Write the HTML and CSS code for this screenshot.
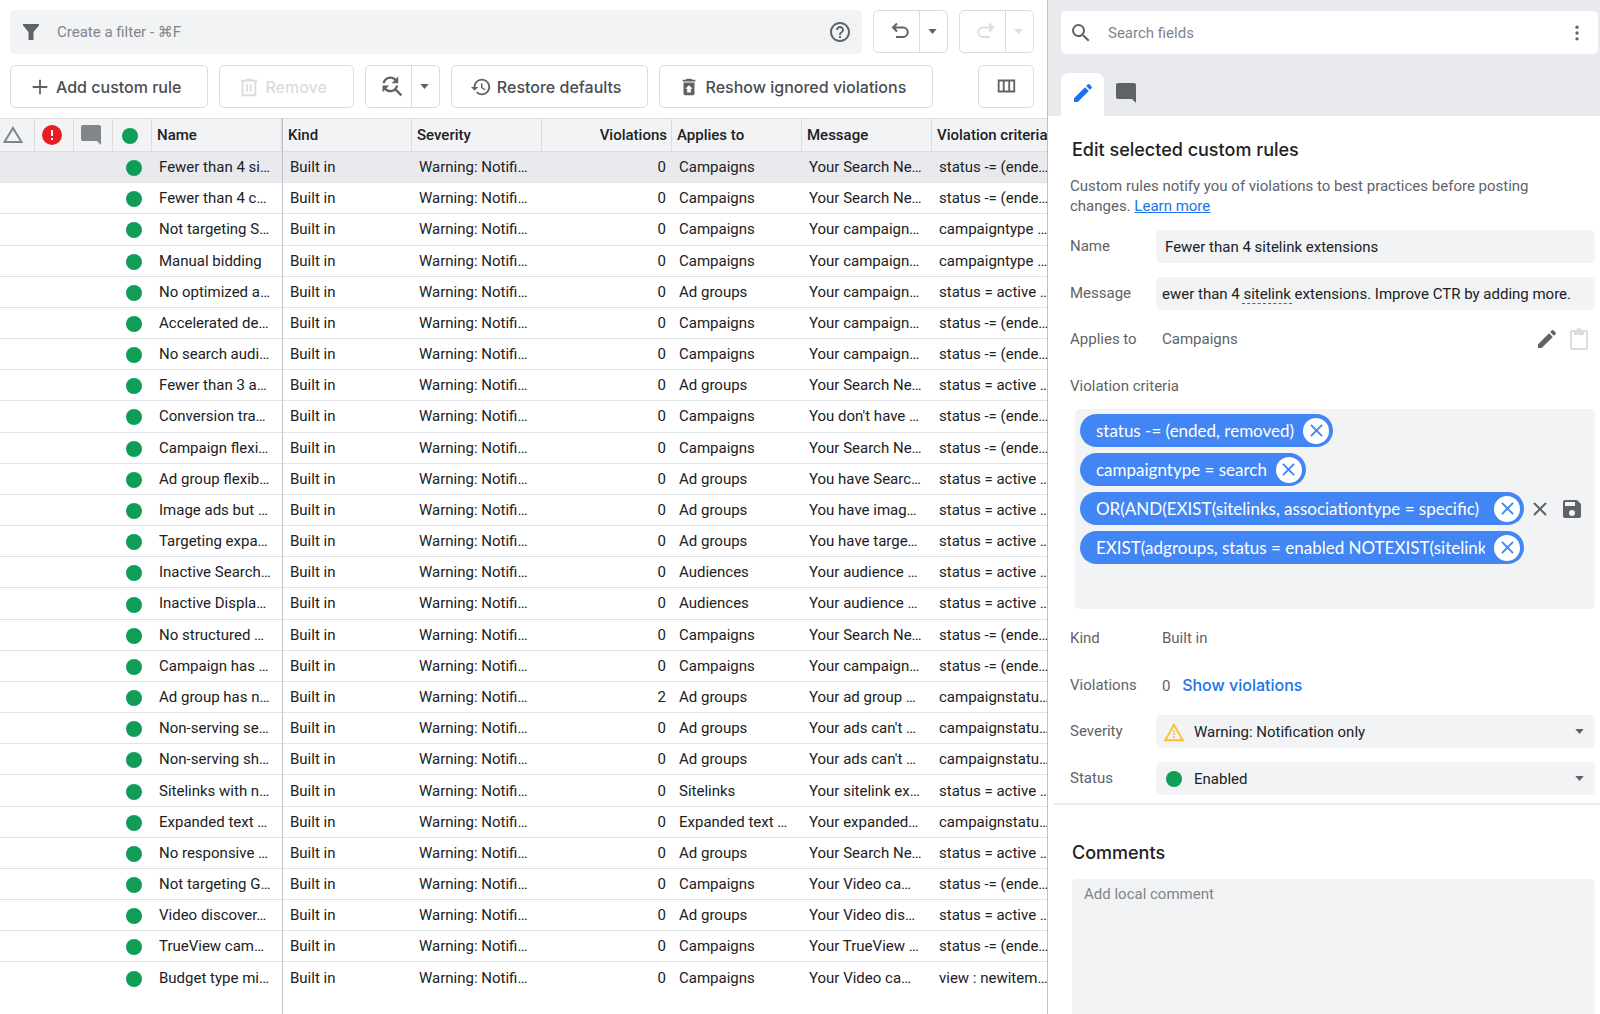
FILE: index.html
```html
<!DOCTYPE html>
<html lang="en">
<head>
    <meta charset="UTF-8">
    <meta name="viewport" content="width=device-width, initial-scale=1.0">
    <title>Custom rules</title>
    <link rel="stylesheet" href="styles.css">
</head>
<body>
<svg class="sprite" aria-hidden="true">
    <symbol id="i-pencil" viewBox="0 0 24 24"><path d="M3 17.25V21h3.75L17.81 9.94l-3.75-3.75L3 17.25zM20.71 7.04a1 1 0 0 0 0-1.41l-2.34-2.34a1 1 0 0 0-1.41 0l-1.83 1.83 3.75 3.75 1.83-1.83z"/></symbol>
    <symbol id="i-comment" viewBox="0 0 24 24"><path d="M22 22l-4-4H4c-1.100 0-2-.9-2-2V4c0-1.100.9-2 2-2h16c1.100 0 2 .9 2 2z"/></symbol>
    <symbol id="i-caret" viewBox="0 0 10 6"><path d="M0 0h10L5 6z"/></symbol>
    <symbol id="i-close" viewBox="0 0 14 14"><path d="M1 1l12 12M13 1L1 13" fill="none" stroke="currentColor" stroke-width="2"/></symbol>
</svg>

<main class="app">
    <section class="list-pane">
        <div class="toolbar">
            <div class="filter-box">
                <svg class="icon" viewBox="0 0 24 24"><path d="M4 4h16v1.500L14.500 12v8h-5v-8L4 5.500z"/></svg>
                <input type="text" aria-label="Create a filter" placeholder="Create a filter - ⌘F">
                <button class="icon-btn" aria-label="Help"><svg class="icon" viewBox="0 0 24 24"><path d="M11 18h2v-2h-2v2zm1-16C6.480 2 2 6.480 2 12s4.480 10 10 10 10-4.480 10-10S17.520 2 12 2zm0 18c-4.410 0-8-3.590-8-8s3.590-8 8-8 8 3.590 8 8-3.590 8-8 8zm0-14c-2.210 0-4 1.790-4 4h2c0-1.100.9-2 2-2s2 .9 2 2c0 2-3 1.750-3 5h2c0-2.250 3-2.500 3-5 0-2.210-1.790-4-4-4z"/></svg></button>
            </div>
            <div class="split">
                <button aria-label="Undo"><svg class="icon" viewBox="0 0 24 24"><path d="M9 4.500L5 8.500l4 4M5.500 8.500H15a4.500 4.500 0 0 1 0 9.500H8" fill="none" stroke="currentColor" stroke-width="2"/></svg></button>
                <button class="drop" aria-label="Undo history"><svg class="caret"><use href="#i-caret"/></svg></button>
            </div>
            <div class="split off">
                <button aria-label="Redo" disabled><svg class="icon" viewBox="0 0 24 24"><path d="M15 4.500l4 4-4 4M18.500 8.500H9a4.500 4.500 0 0 0 0 9.500H16" fill="none" stroke="currentColor" stroke-width="2"/></svg></button>
                <button class="drop" aria-label="Redo history" disabled><svg class="caret"><use href="#i-caret"/></svg></button>
            </div>
        </div>

        <div class="toolbar actions">
            <button class="btn"><svg class="icon" viewBox="0 0 24 24"><path d="M12 4v16M4 12h16" fill="none" stroke="currentColor" stroke-width="2"/></svg>Add custom rule</button>
            <button class="btn" disabled><svg class="icon" viewBox="0 0 24 24"><path d="M3 5h18M9 4h6M5 5v16h14V5M10 9v8M14 9v8" fill="none" stroke="currentColor" stroke-width="2"/></svg>Remove</button>
            <div class="split">
                <button aria-label="Check rules"><svg class="icon wide" viewBox="0 0 24 24"><path d="M11 6c1.380 0 2.630.56 3.540 1.460L12 10h6V4l-2.050 2.050C14.680 4.780 12.930 4 11 4c-3.530 0-6.430 2.610-6.920 6H6.100c.46-2.280 2.480-4 4.900-4zm5.640 9.140c.66-.9 1.120-1.970 1.280-3.140H15.900c-.46 2.280-2.480 4-4.900 4-1.380 0-2.630-.56-3.540-1.460L10 12H4v6l2.050-2.050C7.320 17.220 9.070 18 11 18c1.550 0 2.980-.51 4.140-1.360L20 21.490 21.490 20l-4.850-4.860z"/></svg></button>
                <button class="drop" aria-label="More check options"><svg class="caret"><use href="#i-caret"/></svg></button>
            </div>
            <button class="btn"><svg class="icon" viewBox="0 0 24 24"><path d="M13 3c-4.970 0-9 4.030-9 9H1l3.890 3.890.07.14L9 12H6c0-3.870 3.130-7 7-7s7 3.130 7 7-3.130 7-7 7c-1.930 0-3.680-.79-4.940-2.060l-1.420 1.420C8.270 19.990 10.510 21 13 21c4.970 0 9-4.030 9-9s-4.030-9-9-9zm-1 5v5l4.280 2.540.72-1.210-3.500-2.080V8H12z"/></svg>Restore defaults</button>
            <button class="btn"><svg class="icon" viewBox="0 0 24 24"><path d="M19 4h-3.500l-1-1h-5l-1 1H5v2h14V4zM6 7v12c0 1.100.9 2 2 2h8c1.100 0 2-.9 2-2V7H6zm8 7v4h-4v-4H8l4-4 4 4h-2z"/></svg>Reshow ignored violations</button>
            <button class="btn columns" aria-label="Columns"><svg class="icon" viewBox="0 0 24 24"><path d="M4 6h17v12H4zM9.500 6v12M15.500 6v12" fill="none" stroke="currentColor" stroke-width="2"/></svg></button>
        </div>

        <div class="table-wrap">
            <table class="rules">
                <colgroup>
                    <col class="c-first"><col class="c-icon"><col class="c-icon"><col class="c-icon">
                    <col><col><col><col><col><col><col>
                </colgroup>
                <thead>
                    <tr>
                        <th class="ico first" aria-label="Warnings"><svg class="icon grey" viewBox="0 0 24 24"><path d="M12 5l8.500 14h-17z" fill="none" stroke="currentColor" stroke-width="2"/></svg></th>
                        <th class="ico" aria-label="Errors"><svg class="icon" viewBox="0 0 24 24"><circle cx="12" cy="12" r="10" fill="#ea1c24"/><path d="M11 7h2v6h-2zM11 15h2v2h-2z" fill="#fff"/></svg></th>
                        <th class="ico" aria-label="Comments"><svg class="icon grey"><use href="#i-comment"/></svg></th>
                        <th class="ico" aria-label="Status"><span class="dot"></span></th>
                        <th>Name</th>
                        <th class="split-line">Kind</th>
                        <th>Severity</th>
                        <th class="num">Violations</th>
                        <th>Applies to</th>
                        <th>Message</th>
                        <th>Violation criteria</th>
                    </tr>
                </thead>
                <tbody>
                    <tr class="selected"><td></td><td></td><td></td><td class="st"><span class="dot"></span></td><td>Fewer than 4 si…</td><td class="split-line">Built in</td><td>Warning: Notifi…</td><td class="num">0</td><td>Campaigns</td><td>Your Search Ne…</td><td>status -= (ende…</td></tr>
                    <tr><td></td><td></td><td></td><td class="st"><span class="dot"></span></td><td>Fewer than 4 c…</td><td class="split-line">Built in</td><td>Warning: Notifi…</td><td class="num">0</td><td>Campaigns</td><td>Your Search Ne…</td><td>status -= (ende…</td></tr>
                    <tr><td></td><td></td><td></td><td class="st"><span class="dot"></span></td><td>Not targeting S…</td><td class="split-line">Built in</td><td>Warning: Notifi…</td><td class="num">0</td><td>Campaigns</td><td>Your campaign…</td><td>campaigntype …</td></tr>
                    <tr><td></td><td></td><td></td><td class="st"><span class="dot"></span></td><td>Manual bidding</td><td class="split-line">Built in</td><td>Warning: Notifi…</td><td class="num">0</td><td>Campaigns</td><td>Your campaign…</td><td>campaigntype …</td></tr>
                    <tr><td></td><td></td><td></td><td class="st"><span class="dot"></span></td><td>No optimized a…</td><td class="split-line">Built in</td><td>Warning: Notifi…</td><td class="num">0</td><td>Ad groups</td><td>Your campaign…</td><td>status = active …</td></tr>
                    <tr><td></td><td></td><td></td><td class="st"><span class="dot"></span></td><td>Accelerated de…</td><td class="split-line">Built in</td><td>Warning: Notifi…</td><td class="num">0</td><td>Campaigns</td><td>Your campaign…</td><td>status -= (ende…</td></tr>
                    <tr><td></td><td></td><td></td><td class="st"><span class="dot"></span></td><td>No search audi…</td><td class="split-line">Built in</td><td>Warning: Notifi…</td><td class="num">0</td><td>Campaigns</td><td>Your campaign…</td><td>status -= (ende…</td></tr>
                    <tr><td></td><td></td><td></td><td class="st"><span class="dot"></span></td><td>Fewer than 3 a…</td><td class="split-line">Built in</td><td>Warning: Notifi…</td><td class="num">0</td><td>Ad groups</td><td>Your Search Ne…</td><td>status = active …</td></tr>
                    <tr><td></td><td></td><td></td><td class="st"><span class="dot"></span></td><td>Conversion tra…</td><td class="split-line">Built in</td><td>Warning: Notifi…</td><td class="num">0</td><td>Campaigns</td><td>You don't have …</td><td>status -= (ende…</td></tr>
                    <tr><td></td><td></td><td></td><td class="st"><span class="dot"></span></td><td>Campaign flexi…</td><td class="split-line">Built in</td><td>Warning: Notifi…</td><td class="num">0</td><td>Campaigns</td><td>Your Search Ne…</td><td>status -= (ende…</td></tr>
                    <tr><td></td><td></td><td></td><td class="st"><span class="dot"></span></td><td>Ad group flexib…</td><td class="split-line">Built in</td><td>Warning: Notifi…</td><td class="num">0</td><td>Ad groups</td><td>You have Searc…</td><td>status = active …</td></tr>
                    <tr><td></td><td></td><td></td><td class="st"><span class="dot"></span></td><td>Image ads but …</td><td class="split-line">Built in</td><td>Warning: Notifi…</td><td class="num">0</td><td>Ad groups</td><td>You have imag…</td><td>status = active …</td></tr>
                    <tr><td></td><td></td><td></td><td class="st"><span class="dot"></span></td><td>Targeting expa…</td><td class="split-line">Built in</td><td>Warning: Notifi…</td><td class="num">0</td><td>Ad groups</td><td>You have targe…</td><td>status = active …</td></tr>
                    <tr><td></td><td></td><td></td><td class="st"><span class="dot"></span></td><td>Inactive Search…</td><td class="split-line">Built in</td><td>Warning: Notifi…</td><td class="num">0</td><td>Audiences</td><td>Your audience …</td><td>status = active …</td></tr>
                    <tr><td></td><td></td><td></td><td class="st"><span class="dot"></span></td><td>Inactive Displa…</td><td class="split-line">Built in</td><td>Warning: Notifi…</td><td class="num">0</td><td>Audiences</td><td>Your audience …</td><td>status = active …</td></tr>
                    <tr><td></td><td></td><td></td><td class="st"><span class="dot"></span></td><td>No structured …</td><td class="split-line">Built in</td><td>Warning: Notifi…</td><td class="num">0</td><td>Campaigns</td><td>Your Search Ne…</td><td>status -= (ende…</td></tr>
                    <tr><td></td><td></td><td></td><td class="st"><span class="dot"></span></td><td>Campaign has …</td><td class="split-line">Built in</td><td>Warning: Notifi…</td><td class="num">0</td><td>Campaigns</td><td>Your campaign…</td><td>status -= (ende…</td></tr>
                    <tr><td></td><td></td><td></td><td class="st"><span class="dot"></span></td><td>Ad group has n…</td><td class="split-line">Built in</td><td>Warning: Notifi…</td><td class="num">2</td><td>Ad groups</td><td>Your ad group …</td><td>campaignstatu…</td></tr>
                    <tr><td></td><td></td><td></td><td class="st"><span class="dot"></span></td><td>Non-serving se…</td><td class="split-line">Built in</td><td>Warning: Notifi…</td><td class="num">0</td><td>Ad groups</td><td>Your ads can't …</td><td>campaignstatu…</td></tr>
                    <tr><td></td><td></td><td></td><td class="st"><span class="dot"></span></td><td>Non-serving sh…</td><td class="split-line">Built in</td><td>Warning: Notifi…</td><td class="num">0</td><td>Ad groups</td><td>Your ads can't …</td><td>campaignstatu…</td></tr>
                    <tr><td></td><td></td><td></td><td class="st"><span class="dot"></span></td><td>Sitelinks with n…</td><td class="split-line">Built in</td><td>Warning: Notifi…</td><td class="num">0</td><td>Sitelinks</td><td>Your sitelink ex…</td><td>status = active …</td></tr>
                    <tr><td></td><td></td><td></td><td class="st"><span class="dot"></span></td><td>Expanded text …</td><td class="split-line">Built in</td><td>Warning: Notifi…</td><td class="num">0</td><td>Expanded text …</td><td>Your expanded…</td><td>campaignstatu…</td></tr>
                    <tr><td></td><td></td><td></td><td class="st"><span class="dot"></span></td><td>No responsive …</td><td class="split-line">Built in</td><td>Warning: Notifi…</td><td class="num">0</td><td>Ad groups</td><td>Your Search Ne…</td><td>status = active …</td></tr>
                    <tr><td></td><td></td><td></td><td class="st"><span class="dot"></span></td><td>Not targeting G…</td><td class="split-line">Built in</td><td>Warning: Notifi…</td><td class="num">0</td><td>Campaigns</td><td>Your Video ca…</td><td>status -= (ende…</td></tr>
                    <tr><td></td><td></td><td></td><td class="st"><span class="dot"></span></td><td>Video discover…</td><td class="split-line">Built in</td><td>Warning: Notifi…</td><td class="num">0</td><td>Ad groups</td><td>Your Video dis…</td><td>status = active …</td></tr>
                    <tr><td></td><td></td><td></td><td class="st"><span class="dot"></span></td><td>TrueView cam…</td><td class="split-line">Built in</td><td>Warning: Notifi…</td><td class="num">0</td><td>Campaigns</td><td>Your TrueView …</td><td>status -= (ende…</td></tr>
                    <tr><td></td><td></td><td></td><td class="st"><span class="dot"></span></td><td>Budget type mi…</td><td class="split-line">Built in</td><td>Warning: Notifi…</td><td class="num">0</td><td>Campaigns</td><td>Your Video ca…</td><td>view : newitem…</td></tr>
                    <tr class="rest"><td colspan="5"></td><td class="split-line" colspan="6"></td></tr>
                </tbody>
            </table>
        </div>
    </section>

    <aside class="edit-pane">
        <div class="pane-top">
            <div class="search-box">
                <svg class="icon" viewBox="0 0 24 24"><path d="M15.500 14h-.79l-.28-.27A6.470 6.470 0 0 0 16 9.500 6.500 6.500 0 1 0 9.500 16c1.610 0 3.090-.59 4.230-1.570l.27.28v.79l5 4.990L20.490 19l-4.990-5zm-6 0C7.010 14 5 11.990 5 9.500S7.010 5 9.500 5 14 7.010 14 9.500 11.990 14 9.500 14z"/></svg>
                <input type="text" aria-label="Search fields" placeholder="Search fields">
                <button class="icon-btn" aria-label="More"><svg class="icon" viewBox="0 0 24 24"><circle cx="12" cy="5" r="2"/><circle cx="12" cy="12" r="2"/><circle cx="12" cy="19" r="2"/></svg></button>
            </div>
            <div class="tabs">
                <button class="tab active" aria-label="Edit"><svg class="icon"><use href="#i-pencil"/></svg></button>
                <button class="tab" aria-label="Comments"><svg class="icon"><use href="#i-comment"/></svg></button>
            </div>
        </div>

        <div class="form">
            <h2>Edit selected custom rules</h2>
            <p class="intro">Custom rules notify you of violations to best practices before posting changes. <a href="#">Learn more</a></p>

            <div class="field">
                <label for="name">Name</label>
                <input id="name" class="control" type="text" value="Fewer than 4 sitelink extensions">
            </div>
            <div class="field">
                <label for="message">Message</label>
                <div class="control-wrap">
                    <input id="message" class="control tight" type="text" value="ewer than 4 sitelink extensions. Improve CTR by adding more.">
                    <span class="spelling"></span>
                </div>
            </div>
            <div class="field plain">
                <span class="label">Applies to</span>
                <span class="value">Campaigns</span>
                <button class="icon-btn" aria-label="Edit applies to"><svg class="icon"><use href="#i-pencil"/></svg></button>
                <button class="icon-btn faded" aria-label="Paste" disabled><svg class="icon" viewBox="0 0 24 24"><path d="M19 3h-4.180C14.400 1.840 13.300 1 12 1s-2.400.84-2.820 2H5c-1.100 0-2 .9-2 2v16c0 1.100.9 2 2 2h14c1.100 0 2-.9 2-2V5c0-1.100-.9-2-2-2zm0 18H5V5h2v3h10V5h2z"/></svg></button>
            </div>
            <div class="field plain">
                <span class="label wide">Violation criteria</span>
            </div>

            <div class="criteria">
                <div class="criteria-row"><span class="chip"><span class="chip-text">status -= (ended, removed)</span><button aria-label="Remove status"><svg><use href="#i-close"/></svg></button></span></div>
                <div class="criteria-row"><span class="chip"><span class="chip-text">campaigntype = search</span><button aria-label="Remove campaigntype"><svg><use href="#i-close"/></svg></button></span></div>
                <div class="criteria-row">
                    <span class="chip full"><span class="chip-text">OR(AND(EXIST(sitelinks, associationtype = specific)</span><button aria-label="Remove sitelinks"><svg><use href="#i-close"/></svg></button></span>
                    <button class="icon-btn" aria-label="Clear criteria"><svg class="icon clear"><use href="#i-close"/></svg></button>
                    <button class="icon-btn" aria-label="Save criteria"><svg class="icon" viewBox="0 0 24 24"><path d="M17 3H5a2 2 0 0 0-2 2v14a2 2 0 0 0 2 2h14c1.100 0 2-.9 2-2V7zm-5 16a3 3 0 1 1 0-6 3 3 0 0 1 0 6zm3-10H5V5h10z"/></svg></button>
                </div>
                <div class="criteria-row"><span class="chip full"><span class="chip-text">EXIST(adgroups, status = enabled NOTEXIST(sitelinks</span><button aria-label="Remove adgroups"><svg><use href="#i-close"/></svg></button></span></div>
            </div>

            <div class="field">
                <span class="label">Kind</span>
                <span class="value">Built in</span>
            </div>
            <div class="field">
                <span class="label">Violations</span>
                <span class="value">0 <a class="show" href="#">Show violations</a></span>
            </div>
            <div class="field">
                <label for="severity">Severity</label>
                <div class="control-wrap">
                    <select id="severity" class="control"><option>Warning: Notification only</option></select>
                    <svg class="lead warn" viewBox="0 0 24 24"><path d="M12 4l9.500 17h-19z" fill="none" stroke="currentColor" stroke-width="2"/><path d="M11 10h2v2h-2zM11 13h2v2h-2zM11 16.500h2v2h-2z"/></svg>
                    <svg class="caret"><use href="#i-caret"/></svg>
                </div>
            </div>
            <div class="field">
                <label for="status">Status</label>
                <div class="control-wrap">
                    <select id="status" class="control"><option>Enabled</option></select>
                    <span class="lead dot"></span>
                    <svg class="caret"><use href="#i-caret"/></svg>
                </div>
            </div>
        </div>

        <div class="comments">
            <h2><label for="comment">Comments</label></h2>
            <textarea id="comment" placeholder="Add local comment"></textarea>
        </div>
    </aside>
</main>
</body>
</html>
```
FILE: styles.css
```css
* {
    box-sizing: border-box;
}

body {
    margin: 0;
    font-family: Roboto, "Noto Sans", "DejaVu Sans", sans-serif;
    font-size: 15px;
    color: #202124;
    background-color: #fff;
}

button,
input,
select,
textarea {
    font: inherit;
    color: inherit;
    margin: 0;
    border: none;
    outline: none;
}

button {
    display: flex;
    align-items: center;
    justify-content: center;
    padding: 0;
    background: none;
    cursor: pointer;
}

::placeholder {
    color: #80868b;
    opacity: 1;
}

.sprite {
    display: none;
}

.icon {
    width: 24px;
    height: 24px;
    flex: none;
    fill: currentColor;
    color: #5f6368;
}

.caret {
    width: 9px;
    height: 5px;
    fill: #5f6368;
}

.icon-btn {
    width: 32px;
    height: 32px;
    flex: none;
}

.dot {
    display: inline-block;
    width: 16px;
    height: 16px;
    border-radius: 50%;
    background-color: #0f9d58;
    vertical-align: middle;
}

.app {
    display: grid;
    grid-template-columns: minmax(0, 1fr) 553px;
    height: 100vh;
    overflow: hidden;
}

/* Left side: toolbars and rule list */
.list-pane {
    display: flex;
    flex-direction: column;
    min-height: 0;
    padding-top: 10px;
}

.toolbar {
    display: flex;
    gap: 11px;
    padding: 0 13px 11px 10px;
}

.toolbar.actions {
    padding-bottom: 10px;
}

.filter-box {
    display: flex;
    align-items: center;
    flex: 1;
    min-width: 0;
    height: 44px;
    padding: 0 6px 0 9px;
    border-radius: 5px;
    background-color: #f1f3f4;
}

.filter-box input,
.search-box input {
    flex: 1;
    min-width: 0;
    padding: 0;
    background: none;
}

.filter-box input {
    margin-left: 14px;
}

.split,
.btn {
    height: 43px;
    border: 1px solid #dadce0;
    border-radius: 5px;
    background-color: #fff;
}

.split {
    display: flex;
    width: 75px;
}

.split button {
    flex: 1;
    padding: 0 0 2px 6px;
}

.split .icon.wide {
    width: 27px;
    height: 27px;
}

.split button.drop {
    flex: none;
    width: 28px;
    padding: 0 2px 0 0;
    border-left: 1px solid #dadce0;
}

.off .icon {
    color: #dadce0;
}

.off .caret {
    fill: #dadce0;
}

.btn {
    gap: 5px;
    padding: 0 26px 0 18px;
    font-family: Inter, Roboto, sans-serif;
    font-size: 16px;
    font-weight: 500;
    color: #4a4d51;
    white-space: nowrap;
}

.btn .icon {
    width: 22px;
    height: 22px;
}

.btn:disabled,
.btn:disabled .icon {
    color: #dadce0;
}

.btn.columns {
    width: 56px;
    margin-left: auto;
    padding: 0 0 2px;
}

.table-wrap {
    flex: 1;
    min-height: 0;
    overflow: hidden;
}

.rules {
    width: 1062px;
    height: 100%;
    table-layout: fixed;
    border-collapse: separate;
    border-spacing: 0;
}

.c-first {
    width: 35px;
}

.c-icon {
    width: 39px;
}

.rules th {
    height: 34px;
    padding: 0 4px 0 5px;
    border: 1px solid #dadce0;
    border-left: none;
    background-color: #f1f3f4;
    font-weight: 500;
    text-align: left;
    white-space: nowrap;
}

.rules .ico {
    padding: 0 5px 0 0;
    text-align: center;
}

.rules .first {
    padding-right: 8px;
}

.rules .icon {
    display: inline-block;
    vertical-align: middle;
}

.rules .grey {
    color: #80868b;
}

.rules td {
    height: 31px;
    padding: 0 0 0 7px;
    border-bottom: 1px solid #e0e2e5;
    white-space: nowrap;
    overflow: hidden;
}

.rules .st {
    padding-left: 13px;
}

.rules .num {
    text-align: right;
}

.rules td.num {
    padding-right: 6px;
}

.rules .split-line {
    border-left: 1px solid #bdc1c6;
}

.rules .selected td {
    background-color: #e8eaed;
}

.rules .rest td {
    height: 20px;
    border-bottom: none;
}

.rules tr:nth-last-child(2) td {
    border-bottom-color: transparent;
}

/* Right side: edit panel */
.edit-pane {
    display: flex;
    flex-direction: column;
    min-height: 0;
    border-left: 1px solid #bdc1c6;
}

.pane-top {
    padding: 11px 2px 0 13px;
    background-color: #e8eaed;
}

.search-box {
    display: flex;
    align-items: center;
    height: 43px;
    padding: 0 5px 0 8px;
    border-radius: 5px;
    background-color: #fff;
}

.search-box input {
    margin-left: 15px;
}

.search-box .icon-btn .icon {
    width: 20px;
    height: 20px;
}

.tabs {
    display: flex;
    margin-top: 19px;
}

.tab {
    width: 43px;
    height: 43px;
    padding-bottom: 3px;
    border-radius: 8px 8px 0 0;
}

.tab.active {
    background-color: #fff;
}

.tab.active .icon {
    color: #1a73e8;
}

.form {
    padding: 22px 5px 0 22px;
}

h2 {
    margin: 0;
    padding-left: 2px;
    font-family: Inter, Roboto, sans-serif;
    font-size: 18px;
    font-weight: 500;
    line-height: 24px;
}

.intro {
    margin: 14px 0;
    padding-right: 40px;
    color: #5f6368;
    line-height: 20px;
}

a {
    color: #1a73e8;
}

.field {
    display: flex;
    align-items: center;
    height: 33px;
    margin-bottom: 14px;
    color: #5f6368;
}

.field:last-child {
    margin-bottom: 8px;
}

.field.plain {
    padding-bottom: 4px;
}

.field label,
.field .label {
    flex: none;
    width: 86px;
}

.field label {
    padding-bottom: 2px;
}

.field .label.wide {
    width: auto;
}

.value {
    flex: 1;
    padding-left: 6px;
}

.control-wrap {
    position: relative;
    flex: 1;
}

.control {
    flex: 1;
    width: 100%;
    height: 33px;
    padding: 0 9px;
    border-radius: 5px;
    background-color: #f1f3f4;
    color: #202124;
}

.control.tight {
    padding: 0 6px;
}

select.control {
    appearance: none;
    padding: 0 32px 0 38px;
}

.control-wrap .caret {
    position: absolute;
    top: 14px;
    right: 11px;
    pointer-events: none;
}

.lead {
    position: absolute;
    pointer-events: none;
}

.lead.warn {
    top: 6px;
    left: 7px;
    width: 22px;
    height: 22px;
    color: #fbc02d;
    fill: currentColor;
}

.lead.dot {
    top: 9px;
    left: 10px;
}

/* Spell checker mark under "sitelink" */
.spelling {
    position: absolute;
    left: 86px;
    top: 26px;
    width: 50px;
    border-top: 1px dashed #d93025;
}

.faded .icon {
    color: #dadce0;
}

.criteria {
    display: flex;
    flex-direction: column;
    gap: 6px;
    height: 200px;
    margin: -9px 0 12px 5px;
    padding: 5px;
    border-radius: 5px;
    background-color: #f1f3f4;
}

.criteria-row {
    display: flex;
    align-items: center;
    height: 33px;
}

.chip {
    display: flex;
    align-items: center;
    gap: 9px;
    height: 33px;
    padding: 0 4px 0 16px;
    border-radius: 17px;
    background-color: #4285f4;
    color: #fff;
    font-family: Lato, Roboto, sans-serif;
    font-size: 17px;
}

.chip.full {
    width: 444px;
}

.chip-text {
    flex: 1;
    padding-bottom: 1px;
    overflow: hidden;
    white-space: nowrap;
}

.chip button {
    width: 26px;
    height: 26px;
    flex: none;
    border-radius: 50%;
    background-color: #fff;
    color: #4285f4;
}

.chip button svg {
    width: 13px;
    height: 13px;
}

.icon.clear {
    width: 14px;
    height: 14px;
}

.show {
    margin-left: 8px;
    font-family: Inter, Roboto, sans-serif;
    font-size: 16px;
    font-weight: 500;
    text-decoration: none;
}

.comments {
    display: flex;
    flex-direction: column;
    flex: 1;
    min-height: 0;
    margin-left: 6px;
    padding: 36px 5px 0 16px;
    border-top: 2px solid #e8eaed;
}

.comments textarea {
    flex: 1;
    margin: 14px 0 0 2px;
    padding: 6px 12px;
    border-radius: 5px 5px 0 0;
    background-color: #f1f3f4;
    resize: none;
}
```
